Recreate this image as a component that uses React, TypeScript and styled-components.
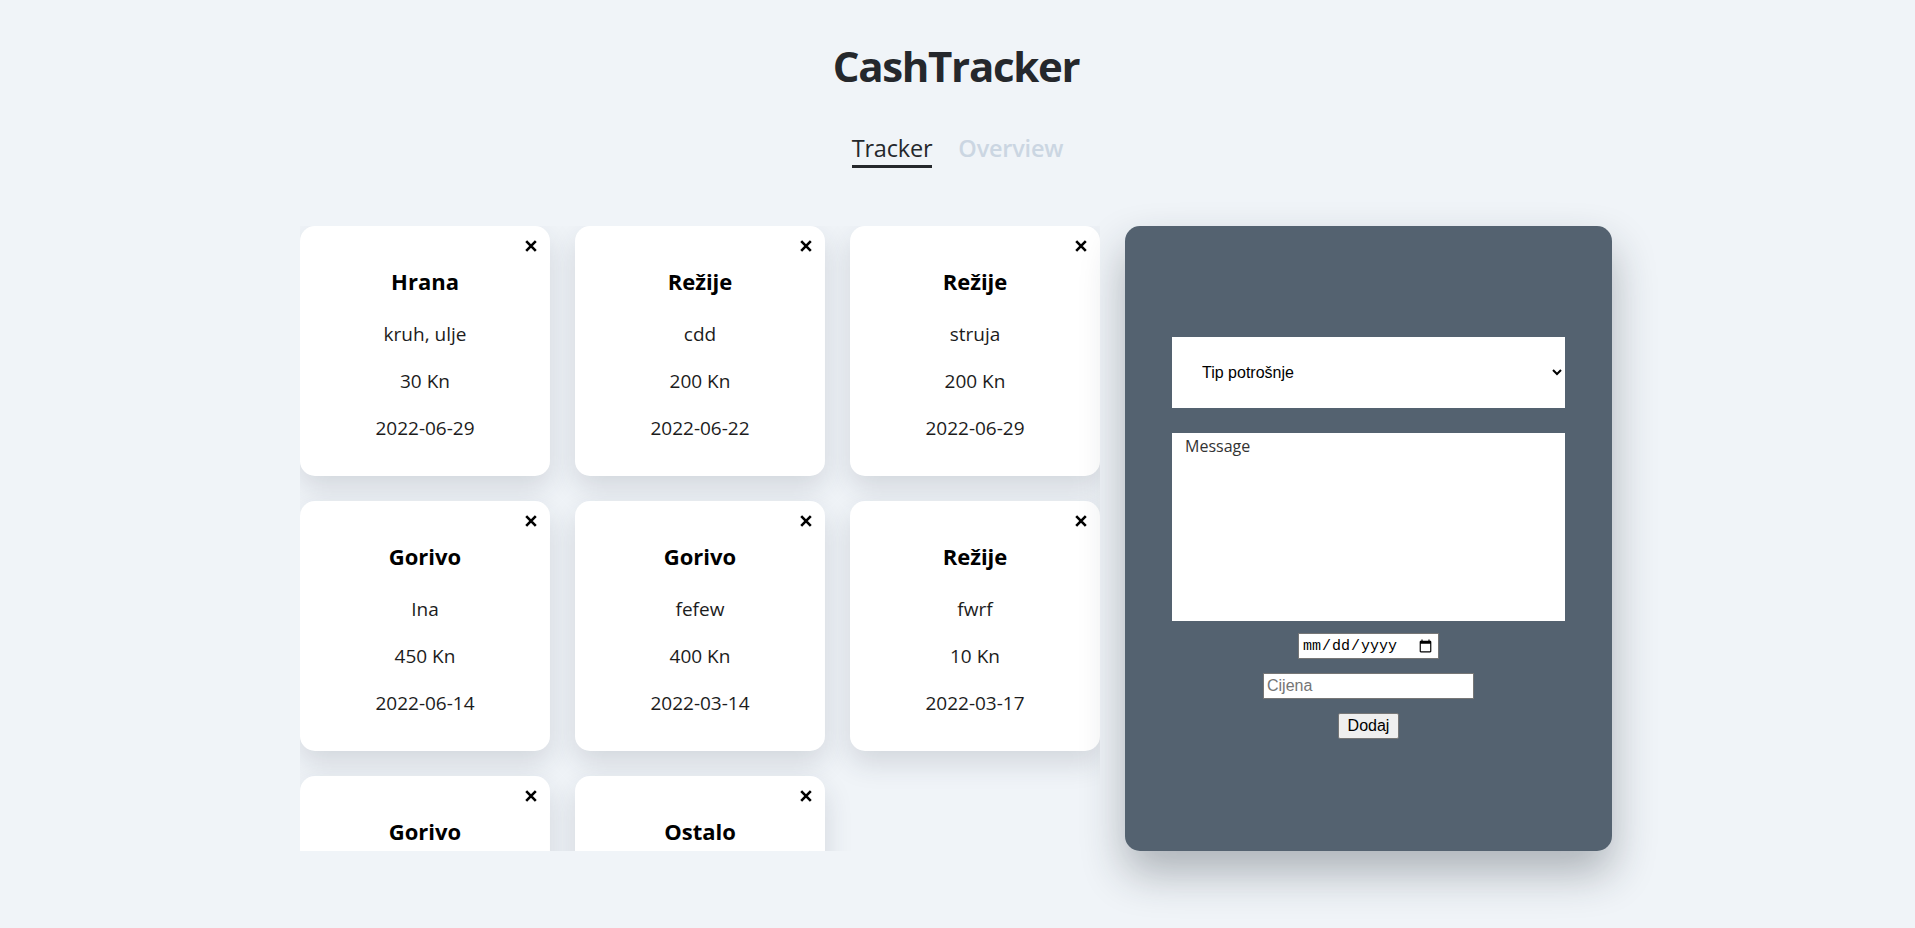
import React, { useState } from 'react';
import styled, { createGlobalStyle } from 'styled-components';

const GlobalStyle = createGlobalStyle`
  body {
    margin: 0;
    background-color: #f0f4f8;
    font-family: "Open Sans", "Noto Sans", sans-serif;
    color: #222;
  }
`;

// Zaglavlje
const Page = styled.div`
  display: flex;
  flex-direction: column;
  align-items: center;
  min-height: 100vh;
`;

const Title = styled.h1`
  margin: 45px 3px 0 0;
  font-size: 42px;
  line-height: 1;
  font-weight: 700;
  color: #25282c;
  letter-spacing: -1.3px;
`;

const Tabs = styled.nav`
  display: flex;
  gap: 26px;
  margin-top: 50px;
`;

const Tab = styled.span<{ $active?: boolean }>`
  font-size: 23.5px;
  line-height: 1;
  padding-bottom: 4px;
  font-weight: ${({ $active }) => ($active ? 400 : 600)};
  color: ${({ $active }) => ($active ? '#25282c' : '#cbd6e2')};
  border-bottom: 3px solid ${({ $active }) => ($active ? '#25282c' : 'transparent')};
  letter-spacing: -0.2px;
  cursor: pointer;
`;

// Glavni dio
const Main = styled.main`
  display: flex;
  gap: 25px;
  margin: 58px 3px 0 0;
`;

const CardGrid = styled.div`
  display: grid;
  grid-template-columns: repeat(3, 250px);
  grid-auto-rows: 250px;
  gap: 25px;
  height: 625px;
  overflow-y: auto;
  scrollbar-width: none;
  padding-bottom: 30px;
  box-sizing: border-box;

  &::-webkit-scrollbar {
    display: none;
  }
`;

const Card = styled.div`
  display: flex;
  flex-direction: column;
  align-items: center;
  background: #fff;
  border-radius: 15px;
  box-shadow: 0 12px 28px rgba(40, 50, 70, 0.15);
  padding: 14px 13px 0;
  box-sizing: border-box;
`;

const CloseRow = styled.div`
  align-self: stretch;
  display: flex;
  justify-content: flex-end;
  height: 12px;
`;

const CloseButton = styled.button`
  border: none;
  background: none;
  padding: 0;
  width: 12px;
  height: 12px;
  display: flex;
  cursor: pointer;
`;

const CardTitle = styled.h3`
  margin: 14px 0 3px;
  font-size: 22px;
  line-height: 30px;
  font-weight: 700;
  color: #000;
`;

const CardLines = styled.div`
  display: flex;
  flex-direction: column;
  align-items: center;
  gap: 23px;
  margin-top: 23px;
`;

const CardText = styled.p`
  margin: 0;
  font-size: 19px;
  line-height: 24px;
  color: #1c1c1c;
`;

// Forma
const FormPanel = styled.form`
  width: 487px;
  height: 625px;
  background-color: #546270;
  border-radius: 15px;
  box-shadow: 0 22px 44px rgba(30, 40, 50, 0.32);
  display: flex;
  flex-direction: column;
  align-items: center;
  justify-content: center;
`;

const Select = styled.select`
  width: 393px;
  height: 71px;
  border: none;
  border-radius: 0;
  background: #fff;
  padding: 0 8px 0 26px;
  font-family: "Liberation Sans", Arial, sans-serif;
  font-size: 16px;
  color: #000;
  outline: none;
`;

const MessageArea = styled.textarea`
  width: 393px;
  height: 188px;
  margin-top: 25px;
  border: none;
  padding: 2px 13px;
  box-sizing: border-box;
  resize: none;
  font-family: "Open Sans", "Noto Sans", sans-serif;
  font-size: 16px;
  outline: none;

  &::placeholder {
    color: #333;
    opacity: 1;
  }
`;

const SmallInput = styled.input<{ $width: number; $mono?: boolean }>`
  width: ${({ $width }) => $width}px;
  height: 26px;
  margin-top: ${({ $mono }) => ($mono ? 12 : 14)}px;
  box-sizing: border-box;
  border: 1px solid #767676;
  padding: 1px 3px;
  background: #fff;
  font-family: ${({ $mono }) =>
    $mono ? '"Liberation Mono", monospace' : '"Liberation Sans", Arial, sans-serif'};
  font-size: ${({ $mono }) => ($mono ? 15 : 16)}px;
  color: #000;
  outline: none;

  &::placeholder {
    color: #757575;
  }
`;

const AddButton = styled.button`
  margin-top: 14px;
  height: 26px;
  padding: 0 9px;
  border: 1px solid #767676;
  border-radius: 2px;
  background: #efefef;
  font-family: "Liberation Sans", Arial, sans-serif;
  font-size: 16px;
  color: #000;
  cursor: pointer;
`;

const CloseIcon = () => (
  <svg width="12" height="12" viewBox="0 0 12 12">
    <path d="M1.2 1.2 L10.8 10.8 M10.8 1.2 L1.2 10.8" stroke="#000" strokeWidth="2.6" />
  </svg>
);

type Trosak = { tip: string; opis: string; cijena: number; datum: string };

const pocetni: Trosak[] = [
  { tip: 'Hrana', opis: 'kruh, ulje', cijena: 30, datum: '2022-06-29' },
  { tip: 'Režije', opis: 'cdd', cijena: 200, datum: '2022-06-22' },
  { tip: 'Režije', opis: 'struja', cijena: 200, datum: '2022-06-29' },
  { tip: 'Gorivo', opis: 'Ina', cijena: 450, datum: '2022-06-14' },
  { tip: 'Gorivo', opis: 'fefew', cijena: 400, datum: '2022-03-14' },
  { tip: 'Režije', opis: 'fwrf', cijena: 10, datum: '2022-03-17' },
  { tip: 'Gorivo', opis: 'Petrol', cijena: 300, datum: '2022-05-02' },
  { tip: 'Ostalo', opis: 'kino', cijena: 60, datum: '2022-04-11' },
];

const App: React.FC = () => {
  const [troskovi, setTroskovi] = useState<Trosak[]>(pocetni);

  const obrisi = (index: number) => {
    setTroskovi(troskovi.filter((_, i) => i !== index));
  };

  return (
    <>
      <GlobalStyle />
      <Page>
        <Title>CashTracker</Title>
        <Tabs>
          <Tab $active>Tracker</Tab>
          <Tab>Overview</Tab>
        </Tabs>
        <Main>
          <CardGrid>
            {troskovi.map((t, index) => (
              <Card key={index}>
                <CloseRow>
                  <CloseButton type="button" onClick={() => obrisi(index)}>
                    <CloseIcon />
                  </CloseButton>
                </CloseRow>
                <CardTitle>{t.tip}</CardTitle>
                <CardLines>
                  <CardText>{t.opis}</CardText>
                  <CardText>{t.cijena} Kn</CardText>
                  <CardText>{t.datum}</CardText>
                </CardLines>
              </Card>
            ))}
          </CardGrid>
          <FormPanel onSubmit={(e) => e.preventDefault()}>
            <Select defaultValue="">
              <option value="" disabled>Tip potrošnje</option>
              <option value="Hrana">Hrana</option>
              <option value="Režije">Režije</option>
              <option value="Gorivo">Gorivo</option>
              <option value="Ostalo">Ostalo</option>
            </Select>
            <MessageArea placeholder="Message" />
            <SmallInput type="date" $width={141} $mono />
            <SmallInput type="text" placeholder="Cijena" $width={211} />
            <AddButton type="submit">Dodaj</AddButton>
          </FormPanel>
        </Main>
      </Page>
    </>
  );
};

export default App;
